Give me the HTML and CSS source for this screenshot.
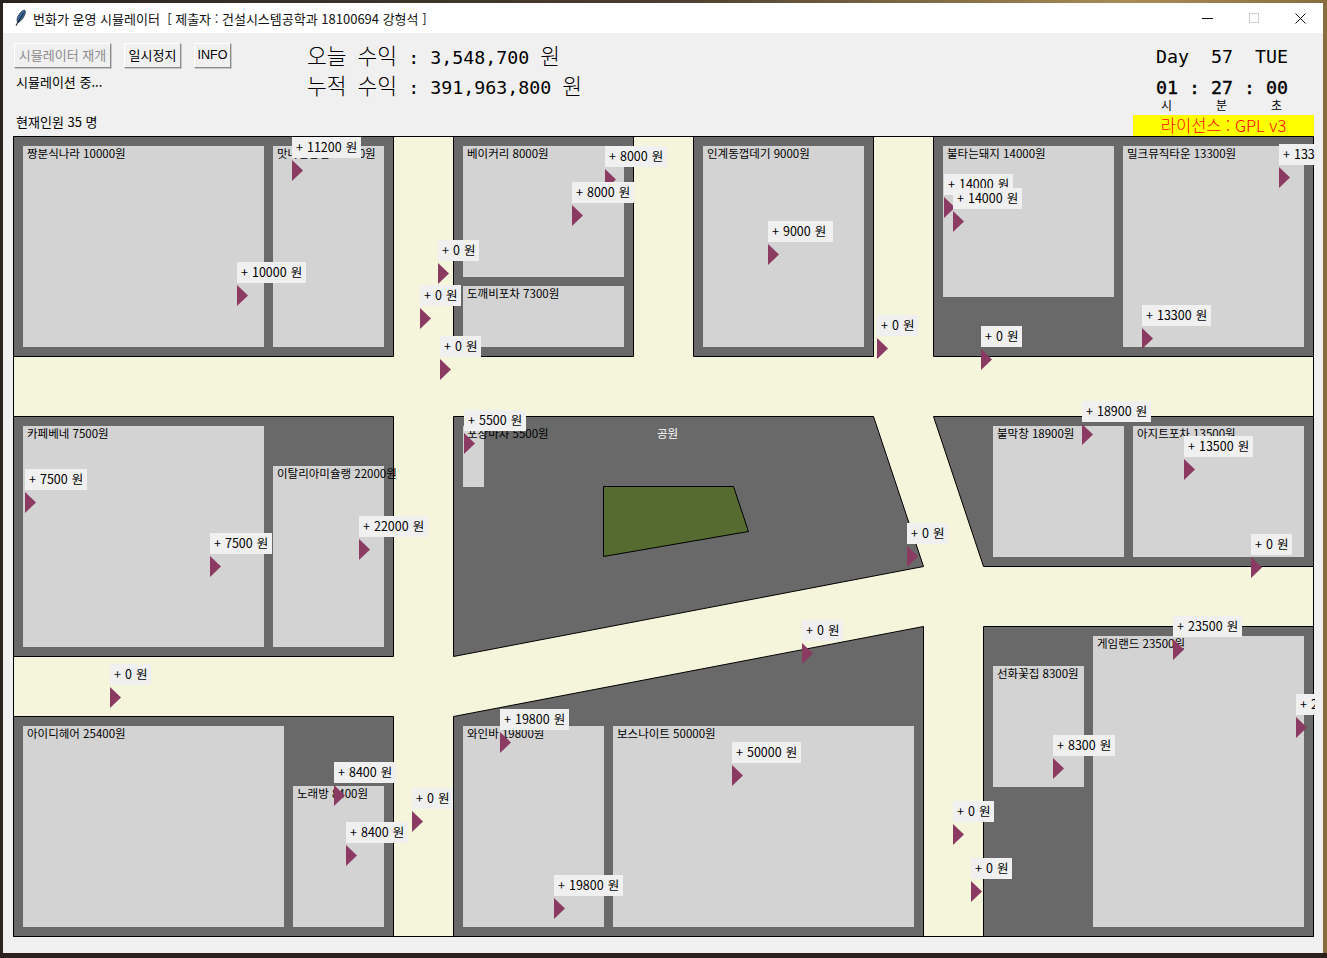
FILE: index.html
```html
<!DOCTYPE html>
<html lang="ko">
<head>
    <meta charset="UTF-8">
    <title>번화가 운영 시뮬레이터</title>
    <link rel="stylesheet" href="styles.css">
</head>
<body>

    <div class="window">
        <!-- barra de titulo -->
        <div class="titlebar">
            <svg class="feather" width="16" height="18" viewBox="0 0 16 18">
                <path d="M11.5 1 C8 2 5 6 4.2 10 C3.9 11.6 4.2 12.8 5 13.4 C8 12.5 11.5 8 12.5 3 Z" fill="#3f6d9e" stroke="#16243a" stroke-width="0.8"/>
                <path d="M10.5 4 L3 16.5" stroke="#16243a" stroke-width="1.1" fill="none"/>
            </svg>
            <span class="title-text">번화가 운영 시뮬레이터&nbsp; [ 제출자 : 건설시스템공학과 18100694 강형석 ]</span>
            <div class="win-controls">
                <svg width="11" height="10" viewBox="0 0 11 10"><path d="M0 5.5 H11" stroke="#111" fill="none"/></svg>
                <svg width="10" height="10" viewBox="0 0 10 10"><rect x="0.5" y="0.5" width="9" height="9" stroke="#ccc" fill="none"/></svg>
                <svg width="11" height="11" viewBox="0 0 11 11"><path d="M0.5 0.5 L10.5 10.5 M10.5 0.5 L0.5 10.5" stroke="#111" fill="none"/></svg>
            </div>
        </div>

        <!-- cabecera -->
        <div class="header">
            <div class="controls">
                <div class="buttons">
                    <button class="btn btn-wide" disabled>시뮬레이터 재개</button>
                    <button class="btn btn-pause">일시정지</button>
                    <button class="btn btn-info">INFO</button>
                </div>
                <div class="status">시뮬레이션 중...</div>
                <div class="people">현재인원 35 명</div>
            </div>

            <div class="profit">
                <div class="profit-row"><span class="kr">오늘</span> <span class="kr">수익</span> : 3,548,700 <span class="kr">원</span></div>
                <div class="profit-row"><span class="kr">누적</span> <span class="kr">수익</span> : 391,963,800 <span class="kr">원</span></div>
            </div>

            <div class="clock">
                <div class="clock-day">Day  57  TUE</div>
                <div class="clock-time">01 : 27 : 00</div>
                <div class="clock-units"><span>시</span><span>분</span><span>초</span></div>
                <div class="license">라이선스 : GPL v3</div>
            </div>
        </div>

        <!-- mapa -->
        <svg class="map" width="1302" height="801" viewBox="13 136 1302 801">
            <rect x="13" y="136" width="1301" height="801" fill="#f5f5dc"/>
            <path d="M13.5 136.5 H1313.5 V936.5 H13.5 Z" fill="none" stroke="#000"/>

            <!-- manzanas -->
            <g class="block">
                <polygon points="13.5,136.5 393.5,136.5 393.5,356.5 13.5,356.5"/>
                <polygon points="453.5,136.5 633.5,136.5 633.5,356.5 453.5,356.5"/>
                <polygon points="693.5,136.5 873.5,136.5 873.5,356.5 693.5,356.5"/>
                <polygon points="933.5,136.5 1313.5,136.5 1313.5,356.5 933.5,356.5"/>
                <polygon points="13.5,416.5 393.5,416.5 393.5,656.5 13.5,656.5"/>
                <polygon points="453.5,416.5 873.5,416.5 923.5,566.5 453.5,656.5"/>
                <polygon points="933.5,416.5 1313.5,416.5 1313.5,566.5 983.5,566.5"/>
                <polygon points="13.5,716.5 393.5,716.5 393.5,936.5 13.5,936.5"/>
                <polygon points="453.5,716.5 923.5,626.5 923.5,936.5 453.5,936.5"/>
                <polygon points="983.5,626.5 1313.5,626.5 1313.5,936.5 983.5,936.5"/>
            </g>
            <polygon class="park" points="603.5,486.5 733.5,486.5 748.5,531.5 603.5,556.5"/>

            <!-- edificios -->
            <g class="shop">
                <rect x="23" y="146" width="241" height="201"/>
                <rect x="273" y="146" width="111" height="201"/>
                <rect x="463" y="146" width="161" height="131"/>
                <rect x="463" y="286" width="161" height="61"/>
                <rect x="703" y="146" width="161" height="201"/>
                <rect x="943" y="146" width="171" height="151"/>
                <rect x="1123" y="146" width="181" height="201"/>
                <rect x="23" y="426" width="241" height="221"/>
                <rect x="273" y="466" width="111" height="181"/>
                <rect x="463" y="426" width="21" height="61"/>
                <rect x="993" y="426" width="131" height="131"/>
                <rect x="1133" y="426" width="171" height="131"/>
                <rect x="23" y="726" width="261" height="201"/>
                <rect x="293" y="786" width="91" height="141"/>
                <rect x="463" y="726" width="141" height="201"/>
                <rect x="613" y="726" width="301" height="201"/>
                <rect x="993" y="666" width="91" height="121"/>
                <rect x="1093" y="636" width="211" height="291"/>
            </g>

            <g class="shop-name">
                <text x="27" y="158">짱분식나라 10000원</text>
                <text x="277" y="158">맛나김밥집 11200원</text>
                <text x="467" y="158">베이커리 8000원</text>
                <text x="467" y="298">도깨비포차 7300원</text>
                <text x="707" y="158">인계동껍데기 9000원</text>
                <text x="947" y="158">불타는돼지 14000원</text>
                <text x="1127" y="158">밀크뮤직타운 13300원</text>
                <text x="27" y="438">카페베네 7500원</text>
                <text x="277" y="478">이탈리아미슐랭 22000원</text>
                <text x="467" y="438">포장마차 5500원</text>
                <text class="park-name" x="657" y="438">공원</text>
                <text x="997" y="438">불막창 18900원</text>
                <text x="1137" y="438">아지트포차 13500원</text>
                <text x="27" y="738">아이디헤어 25400원</text>
                <text x="297" y="798">노래방 8400원</text>
                <text x="467" y="738">와인바 19800원</text>
                <text x="617" y="738">보스나이트 50000원</text>
                <text x="997" y="678">선화꽃집 8300원</text>
                <text x="1097" y="648">게임랜드 23500원</text>
            </g>

            <!-- clientes: etiqueta + triangulo -->
            <g class="tag"><rect x="944" y="174" width="69" height="21"/><text x="948" y="189">+ 14000 원</text><polygon points="944,197 955,207.5 944,218"/></g>
            <g class="tag"><rect x="292" y="137" width="69" height="21"/><text x="296" y="152">+ 11200 원</text><polygon points="292,160 303,170.5 292,181"/></g>
            <g class="tag"><rect x="237" y="262" width="69" height="21"/><text x="241" y="277">+ 10000 원</text><polygon points="237,285 248,295.5 237,306"/></g>
            <g class="tag"><rect x="605" y="146" width="62" height="21"/><text x="609" y="161">+ 8000 원</text><polygon points="605,169 616,179.5 605,190"/></g>
            <g class="tag"><rect x="572" y="182" width="62" height="21"/><text x="576" y="197">+ 8000 원</text><polygon points="572,205 583,215.5 572,226"/></g>
            <g class="tag"><rect x="438" y="240" width="41" height="21"/><text x="442" y="255">+ 0 원</text><polygon points="438,263 449,273.5 438,284"/></g>
            <g class="tag"><rect x="420" y="285" width="41" height="21"/><text x="424" y="300">+ 0 원</text><polygon points="420,308 431,318.5 420,329"/></g>
            <g class="tag"><rect x="440" y="336" width="41" height="21"/><text x="444" y="351">+ 0 원</text><polygon points="440,359 451,369.5 440,380"/></g>
            <g class="tag"><rect x="768" y="221" width="65" height="21"/><text x="772" y="236">+ 9000 원</text><polygon points="768,244 779,254.5 768,265"/></g>
            <g class="tag"><rect x="953" y="188" width="69" height="21"/><text x="957" y="203">+ 14000 원</text><polygon points="953,211 964,221.5 953,232"/></g>
            <g class="tag"><rect x="1142" y="305" width="69" height="21"/><text x="1146" y="320">+ 13300 원</text><polygon points="1142,328 1153,338.5 1142,349"/></g>
            <g class="tag"><rect x="1279" y="144" width="69" height="21"/><text x="1283" y="159">+ 13300 원</text><polygon points="1279,167 1290,177.5 1279,188"/></g>
            <g class="tag"><rect x="877" y="315" width="41" height="21"/><text x="881" y="330">+ 0 원</text><polygon points="877,338 888,348.5 877,359"/></g>
            <g class="tag"><rect x="981" y="326" width="41" height="21"/><text x="985" y="341">+ 0 원</text><polygon points="981,349 992,359.5 981,370"/></g>
            <g class="tag"><rect x="1082" y="401" width="69" height="21"/><text x="1086" y="416">+ 18900 원</text><polygon points="1082,424 1093,434.5 1082,445"/></g>
            <g class="tag"><rect x="1184" y="436" width="69" height="21"/><text x="1188" y="451">+ 13500 원</text><polygon points="1184,459 1195,469.5 1184,480"/></g>
            <g class="tag"><rect x="464" y="410" width="62" height="21"/><text x="468" y="425">+ 5500 원</text><polygon points="464,433 475,443.5 464,454"/></g>
            <g class="tag"><rect x="25" y="469" width="62" height="21"/><text x="29" y="484">+ 7500 원</text><polygon points="25,492 36,502.5 25,513"/></g>
            <g class="tag"><rect x="210" y="533" width="62" height="21"/><text x="214" y="548">+ 7500 원</text><polygon points="210,556 221,566.5 210,577"/></g>
            <g class="tag"><rect x="359" y="516" width="69" height="21"/><text x="363" y="531">+ 22000 원</text><polygon points="359,539 370,549.5 359,560"/></g>
            <g class="tag"><rect x="907" y="523" width="41" height="21"/><text x="911" y="538">+ 0 원</text><polygon points="907,546 918,556.5 907,567"/></g>
            <g class="tag"><rect x="1251" y="534" width="41" height="21"/><text x="1255" y="549">+ 0 원</text><polygon points="1251,557 1262,567.5 1251,578"/></g>
            <g class="tag"><rect x="802" y="620" width="41" height="21"/><text x="806" y="635">+ 0 원</text><polygon points="802,643 813,653.5 802,664"/></g>
            <g class="tag"><rect x="110" y="664" width="41" height="21"/><text x="114" y="679">+ 0 원</text><polygon points="110,687 121,697.5 110,708"/></g>
            <g class="tag"><rect x="1173" y="616" width="69" height="21"/><text x="1177" y="631">+ 23500 원</text><polygon points="1173,639 1184,649.5 1173,660"/></g>
            <g class="tag"><rect x="1296" y="694" width="69" height="21"/><text x="1300" y="709">+ 25400 원</text><polygon points="1296,717 1307,727.5 1296,738"/></g>
            <g class="tag"><rect x="500" y="709" width="69" height="21"/><text x="504" y="724">+ 19800 원</text><polygon points="500,732 511,742.5 500,753"/></g>
            <g class="tag"><rect x="732" y="742" width="69" height="21"/><text x="736" y="757">+ 50000 원</text><polygon points="732,765 743,775.5 732,786"/></g>
            <g class="tag"><rect x="334" y="762" width="62" height="21"/><text x="338" y="777">+ 8400 원</text><polygon points="334,785 345,795.5 334,806"/></g>
            <g class="tag"><rect x="1053" y="735" width="62" height="21"/><text x="1057" y="750">+ 8300 원</text><polygon points="1053,758 1064,768.5 1053,779"/></g>
            <g class="tag"><rect x="346" y="822" width="62" height="21"/><text x="350" y="837">+ 8400 원</text><polygon points="346,845 357,855.5 346,866"/></g>
            <g class="tag"><rect x="412" y="788" width="41" height="21"/><text x="416" y="803">+ 0 원</text><polygon points="412,811 423,821.5 412,832"/></g>
            <g class="tag"><rect x="953" y="801" width="41" height="21"/><text x="957" y="816">+ 0 원</text><polygon points="953,824 964,834.5 953,845"/></g>
            <g class="tag"><rect x="971" y="858" width="41" height="21"/><text x="975" y="873">+ 0 원</text><polygon points="971,881 982,891.5 971,902"/></g>
            <g class="tag"><rect x="554" y="875" width="69" height="21"/><text x="558" y="890">+ 19800 원</text><polygon points="554,898 565,908.5 554,919"/></g>
        </svg>
    </div>

</body>
</html>
```
FILE: styles.css
```css
html, body {
    margin: 0;
    height: 100%;
    overflow: hidden;
}
body {
    background:
        linear-gradient(0deg, #2b211c 5px, transparent 5px),
        linear-gradient(90deg, #2a2420 0%, #4a3d30 50%, #a98c55 85%, #8a6d3f 100%);
    font-family: "Noto Sans CJK KR", "Liberation Sans", sans-serif;
    color: #000;
}
.window {
    width: 1320px;
    height: 950px;
    margin: 3px 0 0 3px;
    background-color: #f0f0f0;
    display: flex;
    flex-direction: column;
}

/* barra de titulo */
.titlebar {
    height: 30px;
    background-color: #fff;
    display: flex;
    align-items: center;
    padding-left: 10px;
    flex-shrink: 0;
}
.feather {
    margin-right: 4px;
}
.title-text {
    font-size: 13px;
    color: #111;
}
.win-controls {
    margin-left: auto;
    display: flex;
    align-items: center;
    gap: 36px;
    padding-right: 17px;
}

/* cabecera */
.header {
    height: 103px;
    display: flex;
    flex-shrink: 0;
}
.controls {
    width: 294px;
    padding: 10px 0 0 10px;
}
.buttons {
    display: flex;
    gap: 13px;
    margin-left: 1px;
}
.btn {
    height: 25px;
    padding: 0 0 2px;
    background-color: #f0f0f0;
    border: 1px solid;
    border-color: #fff #8a8a8a #8a8a8a #fff;
    box-shadow: 1px 1px 0 #c8c8c8;
    font-family: inherit;
    font-size: 13px;
    color: #000;
}
.btn:disabled {
    color: #8c8c8c;
}
.btn-wide { width: 97px; }
.btn-pause { width: 57px; }
.btn-info { width: 37px; font-family: "Liberation Sans", sans-serif; font-size: 12.5px; }
.status {
    margin: 5px 0 0 3px;
    font-size: 13px;
    line-height: 18px;
}
.people {
    margin: 22px 0 0 3px;
    font-size: 13px;
    line-height: 18px;
}
.profit {
    padding-top: 7px;
    font-family: "DejaVu Sans Mono", monospace;
    font-size: 18.3px;
}
.profit-row {
    height: 30px;
    line-height: 30px;
    white-space: pre;
}
.kr {
    font-family: "Noto Sans CJK KR", sans-serif;
    font-size: 21.5px;
    font-weight: 300;
}
.clock {
    width: 181px;
    margin-left: auto;
    margin-right: 9px;
    font-family: "DejaVu Sans Mono", monospace;
    font-size: 18.3px;
    display: flex;
    flex-direction: column;
}
.clock-day, .clock-time {
    padding-left: 23px;
    white-space: pre;
}
.clock-day {
    margin-top: 12px;
    line-height: 24px;
}
.clock-time {
    margin-top: 7px;
    line-height: 24px;
    -webkit-text-stroke: 0.4px #000;
}
.clock-units {
    display: grid;
    grid-template-columns: repeat(3, 55px);
    justify-items: center;
    padding-left: 6px;
    font-family: "Noto Sans CJK KR", sans-serif;
    font-size: 12px;
    line-height: 13px;
    margin-top: -2px;
}
.license {
    margin-top: auto;
    height: 21px;
    line-height: 21px;
    background-color: #ffff00;
    color: #ff0000;
    text-align: center;
    font-family: "Noto Sans CJK KR", sans-serif;
    font-size: 16.5px;
    font-weight: 300;
}

/* mapa */
.map {
    display: block;
    margin-left: 10px;
    flex-shrink: 0;
}
.block polygon {
    fill: #696969;
    stroke: #000;
    stroke-width: 1;
}
.park {
    fill: #556b2f;
    stroke: #000;
}
.shop rect {
    fill: #d3d3d3;
}
.shop-name text {
    font-size: 11.5px;
    fill: #000;
}
.shop-name .park-name {
    fill: #fff;
}
.tag rect {
    fill: #f0f0f0;
}
.tag text {
    font-size: 12.5px;
    word-spacing: 0.5px;
    fill: #000;
}
.tag polygon {
    fill: #8b3a62;
}
```
